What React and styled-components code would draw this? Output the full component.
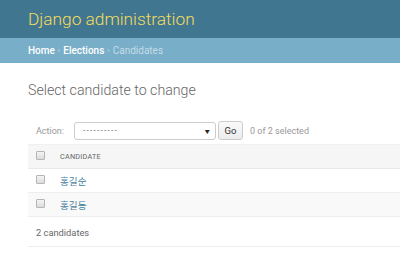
import styled, { createGlobalStyle } from 'styled-components';

const GlobalStyle = createGlobalStyle`
  html, body {
    margin: 0;
    padding: 0;
    background: #fff;
    font-family: Roboto, "Noto Sans CJK KR", "Liberation Sans", sans-serif;
    color: #333;
    overflow: hidden;
  }
`;

const Header = styled.header`
  height: 38px;
  background: #417690;
  display: flex;
  align-items: center;
  padding-left: 28px;
`;

const Branding = styled.h1`
  margin: 0;
  font-size: 17.3px;
  font-weight: 300;
  color: #f5dd5d;
`;

const Breadcrumbs = styled.div`
  height: 25px;
  background: #79aec8;
  display: flex;
  align-items: center;
  padding-left: 28px;
  font-size: 10px;
  color: #c4dce8;
`;

const Crumb = styled.a`
  color: #fff;
  text-decoration: none;
  font-weight: 500;
`;

const Sep = styled.span`
  margin: 0 3px;
  font-size: 8px;
  color: #c4dce8;
`;

const Content = styled.main`
  padding: 19px 0 0 28px;
`;

const Title = styled.h2`
  margin: 0 0 18px;
  height: 17px;
  line-height: 17px;
  font-size: 14.2px;
  font-weight: 300;
  color: #666;
`;

const Actions = styled.div`
  display: flex;
  align-items: center;
  height: 27px;
  padding-left: 8px;
  font-size: 8.5px;
  color: #666;
`;

const Label = styled.span`
  color: #999;
  font-size: 9px;
  width: 38px;
`;

const Select = styled.div`
  width: 142px;
  height: 18px;
  border: 1px solid #ccc;
  border-radius: 3px;
  display: flex;
  align-items: center;
  justify-content: space-between;
  padding: 0 4px 0 8px;
  box-sizing: border-box;
  color: #555;
  font-size: 8px;
  letter-spacing: 1.3px;
`;

const Arrow = styled.span`
  font-size: 5px;
  color: #222;
`;

const GoButton = styled.button`
  margin-left: 2px;
  height: 19px;
  width: 25px;
  padding: 0;
  border: 1px solid #ccc;
  border-radius: 3px;
  background: linear-gradient(#fafafa, #ececec);
  font-family: inherit;
  font-size: 9.5px;
  color: #333;
`;

const Counter = styled.span`
  margin-left: 7px;
  font-size: 9px;
  color: #999;
`;

const Table = styled.div`
  border-top: 1px solid #f0f0f0;
`;

const Row = styled.div`
  display: flex;
  align-items: center;
  height: 23px;
  background: ${(p) => (p.$head ? '#f6f6f6' : p.$alt ? '#f9f9f9' : '#fff')};
  border-bottom: 1px solid ${(p) => (p.$head ? '#eaeaea' : '#eee')};
  padding-left: 8px;
`;

const Check = styled.span`
  width: 7px;
  height: 7px;
  border: 1px solid #b5b5b5;
  border-radius: 1px;
  background: linear-gradient(#f4f4f4, #dcdcdc);
  margin-right: 15px;
  margin-bottom: 3px;
`;

const HeadCell = styled.span`
  font-size: 7.3px;
  text-transform: uppercase;
  color: #666;
  letter-spacing: 0.2px;
`;

const LinkCell = styled.a`
  font-size: 9.6px;
  color: #447e9b;
  text-decoration: none;
`;

const Paginator = styled.div`
  height: 28px;
  display: flex;
  align-items: center;
  padding-left: 8px;
  border-bottom: 1px solid #eee;
  margin-top: 1px;
  font-size: 9.3px;
  color: #666;
`;

const candidates = ['홍길순', '홍길동'];

export default function App() {
  return (
    <>
      <GlobalStyle />
      <Header>
        <Branding>Django administration</Branding>
      </Header>
      <Breadcrumbs>
        <Crumb href="#">Home</Crumb>
        <Sep>›</Sep>
        <Crumb href="#">Elections</Crumb>
        <Sep>›</Sep>
        Candidates
      </Breadcrumbs>
      <Content>
        <Title>Select candidate to change</Title>
        <Actions>
          <Label>Action:</Label>
          <Select>
            <span>----------</span>
            <Arrow>▼</Arrow>
          </Select>
          <GoButton>Go</GoButton>
          <Counter>0 of 2 selected</Counter>
        </Actions>
        <Table>
          <Row $head>
            <Check />
            <HeadCell>Candidate</HeadCell>
          </Row>
          {candidates.map((name, i) => (
            <Row key={name} $alt={i % 2 === 1}>
              <Check />
              <LinkCell href="#">{name}</LinkCell>
            </Row>
          ))}
        </Table>
        <Paginator>2 candidates</Paginator>
      </Content>
    </>
  );
}
